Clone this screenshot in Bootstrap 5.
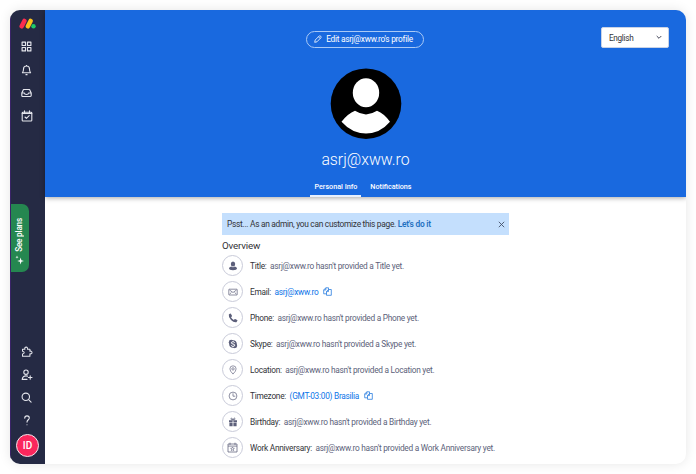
<!DOCTYPE html>
<html lang="en">
<head>
<meta charset="utf-8">
<meta name="viewport" content="width=device-width, initial-scale=1">
<title>Profile</title>
<link href="https://cdn.jsdelivr.net/npm/bootstrap@5.3.0/dist/css/bootstrap.min.css" rel="stylesheet">
<style>
html,body{height:474px;overflow:hidden}
body{font-family:Roboto,"Liberation Sans",sans-serif;font-size:8.5px;line-height:12px;color:#323338;background:#fff;padding:10px}
svg{display:block;flex:none}
.app-window{width:676px;height:454px;border-radius:10px;box-shadow:0 0 12px rgba(0,0,0,.1)}
.side{width:35px;flex:none;background:#252a44;border-left:1px solid #3b2468;color:#e4e5ec}
.side-logo{height:25px;padding:8px 0 0 8px}
.side-item{height:23px;padding-right:3px}
.side-low{height:22.8px}
.plans{width:17.5px;height:68px;margin-top:77px;border-radius:0 7px 7px 0;background:#258750;color:#fff;font-weight:500;padding-bottom:7px;padding-right:1px}
.plans span{writing-mode:vertical-rl;transform:rotate(180deg);font-size:8.2px;letter-spacing:-.2px;line-height:12px}
.plans svg{margin-top:3px}
.me{width:23px;height:23px;margin:2px 0 7px 5px;background:#fb275d;border:1px solid #f3e6ec;font-size:10px;font-weight:500;color:#fff}
.hero{height:187px;background:#1969df;color:#fff;box-shadow:0 1px 5px rgba(0,0,0,.35)}
.hero-row{display:grid;grid-template-columns:1fr auto 1fr;height:48px;padding:17px 17px 0 17px}
.edit-btn{width:118px;height:17px;margin:4px 1px 0 -1px;border:1px solid #a9c9f6;color:#fff;font-size:8.3px;letter-spacing:-.25px;line-height:12px;padding:0 2px 1px 0;--bs-btn-padding-x:0;--bs-btn-padding-y:0}
.lang{width:68px;height:21px;border-radius:2px;border:1px solid #c9d3e6;padding:0 6px 0 7px;color:#323338;font-size:8.2px;letter-spacing:-.3px}
.who{font-size:15.8px;line-height:20px;font-weight:300;margin-top:10px}
.photo{margin-top:11px}
.tabs{gap:5px;margin:10px 5px 0 0;font-size:7.2px;font-weight:500}
.tabs .nav-link{color:#fff;padding:0 4px;height:17px;line-height:13px;border-bottom:2px solid transparent;border-radius:0}
.tabs .nav-link.active{border-color:#e9f1fd}
.info{width:287px;margin-left:177px;padding-top:16px}
.tip{height:22px;background:#c4dffd;padding:0 4px 0 5px;font-size:8.4px;letter-spacing:-.3px}
.tip a{color:#1f70c1;font-weight:600;letter-spacing:-.25px}
.over{font-size:9.8px;letter-spacing:-.2px;line-height:13px;margin:4px 0 .5px;font-weight:400}
.fact{height:26.05px;font-size:8.3px;letter-spacing:-.26px;white-space:nowrap}
.disc{width:21px;height:21px;flex:none;border:1px solid #c9cbd9;margin-right:7px;color:#5c5f7a}
.val{color:#5c5f7a;margin-left:3.5px}
.val-link{color:#0b73e8;margin-left:3.5px}
.copy{color:#2b7de0;margin-left:5px}
</style>
</head>
<body>
<div class="app-window d-flex overflow-hidden bg-white">
  <nav class="side d-flex flex-column">
    <div class="side-logo"><svg width="17" height="11" viewBox="0 0 17 11"><g stroke-width="4.5" stroke-linecap="round"><path d="M2.7 8.300 5.400 2.900" stroke="#fb2d4e"/><path d="M8.900 8.300 11.600 2.900" stroke="#fdc21b"/></g><circle cx="14.500" cy="8.200" r="2.200" fill="#1fcb67"/></svg></div>
    <div class="side-item d-flex align-items-center justify-content-center"><svg width="11" height="11" viewBox="0 0 11 11" fill="none" stroke="currentColor" stroke-width="1.15"><path d="M1.1 1.1h3.4v3.4H1.1zM6.5 1.1h3.4v3.4H6.5zM1.1 6.5h3.4v3.4H1.1zM6.5 6.5h3.4v3.4H6.5z" stroke-linejoin="round"/></svg></div>
    <div class="side-item d-flex align-items-center justify-content-center"><svg width="11" height="12" viewBox="0 0 11 12" fill="none" stroke="currentColor" stroke-width="1.1" stroke-linejoin="round"><path d="M1.4 8.8C2.3 7.8 2.5 7 2.5 5a3 3 0 0 1 6 0c0 2 .2 2.800 1.100 3.800zM4.500 10.600h2M5.500 1v1"/></svg></div>
    <div class="side-item d-flex align-items-center justify-content-center"><svg width="11" height="10" viewBox="0 0 11 10" fill="none" stroke="currentColor" stroke-width="1.15" stroke-linejoin="round"><path d="M.8 5 2.500 1.500h6L10.200 5v2.600a.9.9 0 0 1-.9.9H1.700a.9.9 0 0 1-.9-.9zM.8 5h2.600c.2 2 4 2 4.200 0h2.600"/></svg></div>
    <div class="side-item d-flex align-items-center justify-content-center"><svg width="12" height="12" viewBox="0 0 12 12" fill="none" stroke="currentColor" stroke-width="1.1" stroke-linejoin="round" stroke-linecap="round"><rect x="1.200" y="2.200" width="9.600" height="8.800" rx=".8"/><path d="M1.200 3.500h9.600M3.500.8v2M8.500.8v2M4 7l1.400 1.300L8.200 5.600"/></svg></div>
    <div class="plans d-flex flex-column align-items-center justify-content-end">
      <span>See plans</span>
      <svg width="11" height="10" viewBox="0 0 11 10" fill="#fff"><path d="M6.600 2.600 7.400 5.200 10 6 7.400 6.800 6.600 9.400 5.800 6.800 3.200 6 5.800 5.200z"/><path d="M3 .6l.4 1.200 1.200.4-1.200.4L3 3.800l-.4-1.200-1.200-.4 1.200-.4z"/></svg>
    </div>
    <div class="mt-auto">
      <div class="side-low side-item d-flex align-items-center justify-content-center"><svg width="12" height="12" viewBox="0 0 12 12" fill="none" stroke="currentColor" stroke-width="1.050" stroke-linejoin="round"><path d="M1.500 3.300h2.400C3.400 1.900 4.200 1.100 5.200 1.100S6.900 1.900 6.500 3.300h2.400v1.900c1.300-.3 2.100.4 2.100 1.300S10.200 8.100 8.900 7.800v2.400H1.500V8.100c1.300-.2 1.700-.9 1.700-1.500S2.800 5.400 1.500 5.200z"/></svg></div>
      <div class="side-low side-item d-flex align-items-center justify-content-center"><svg width="12" height="12" viewBox="0 0 12 12" fill="none" stroke="currentColor" stroke-width="1.1" stroke-linejoin="round" stroke-linecap="round"><circle cx="5" cy="3.200" r="2.200"/><path d="M6.500 7.100C3.500 6.300 1.200 7.700 1.200 10.400H6M9.200 6.700v3.600M7.400 8.500H11"/></svg></div>
      <div class="side-low side-item d-flex align-items-center justify-content-center"><svg width="11" height="11" viewBox="0 0 11 11" fill="none" stroke="currentColor" stroke-width="1.100" stroke-linecap="round"><circle cx="4.800" cy="4.800" r="3.700"/><path d="m7.600 7.600 2.500 2.500"/></svg></div>
      <div class="side-low side-item d-flex align-items-center justify-content-center"><svg width="8" height="11" viewBox="0 0 8 11" fill="none" stroke="currentColor" stroke-width="1.100" stroke-linecap="round"><path d="M1.700 3.100C1.800 1.600 2.700.9 4 .9s2.300.8 2.300 2.100C6.300 4.800 4 4.800 4 7.100M4 9.700v.1"/></svg></div>
      <div class="me rounded-circle d-flex align-items-center justify-content-center">ID</div>
    </div>
  </nav>
  <main class="flex-grow-1">
    <header class="hero d-flex flex-column">
      <div class="hero-row">
        <span></span>
        <button type="button" class="edit-btn btn rounded-pill d-flex align-items-center justify-content-center"><svg class="me-1" width="8" height="8" viewBox="0 0 8 8" fill="none" stroke="#fff" stroke-width=".8" stroke-linejoin="round"><path d="M.7 7.300 1.200 5 5.300.9Q6 .4 6.700 1.200T7 2.600L3 6.800zM4.500 1.800l1.700 1.700"/></svg>Edit asrj@xww.ro's profile</button>
        <div class="lang bg-white d-flex align-items-center justify-content-between ms-auto"><span>English</span><svg width="6" height="5" viewBox="0 0 6 5" fill="none" stroke="#434659" stroke-width="1"><path d="m.7 1 2.300 2.300L5.300 1"/></svg></div>
      </div>
      <div class="d-flex flex-column align-items-center">
        <svg class="photo" width="72" height="72" viewBox="0 0 72 72"><circle cx="36" cy="35.700" r="35.300"/><ellipse cx="36" cy="24.700" rx="13.200" ry="14.500" fill="#fff"/><path d="M25 42.800Q36 50 47 42.800 54 45.500 60 53.800 50 65.500 36 65.500T11.500 53.800Q18 45.500 25 42.800z" fill="#fff"/></svg>
        <div class="who">asrj@xww.ro</div>
        <ul class="tabs nav"><li class="nav-item"><a class="nav-link active">Personal Info</a></li><li class="nav-item"><a class="nav-link">Notifications</a></li></ul>
      </div>
    </header>
    <section class="info">
      <div class="tip d-flex align-items-center justify-content-between"><span>Psst... As an admin, you can customize this page. <a class="text-decoration-none">Let's do it</a></span><svg width="7" height="7" viewBox="0 0 7 7" stroke="#44506a" stroke-width=".9"><path d="m.8.8 5.400 5.400M6.200.8.8 6.200"/></svg></div>
      <h1 class="over">Overview</h1>
      <div class="fact d-flex align-items-center"><span class="disc rounded-circle d-flex align-items-center justify-content-center"><svg width="10" height="10" viewBox="0 0 10 10" fill="currentColor"><ellipse cx="5" cy="2.900" rx="2.200" ry="2.500"/><path d="M1 7.300Q1.200 6 3.200 5.600q1.800 1.200 3.600 0Q8.800 6 9 7.300 9 9.200 5 9.200T1 7.300z"/></svg></span><span>Title:</span><span class="val">asrj@xww.ro hasn't provided a Title yet.</span></div>
      <div class="fact d-flex align-items-center"><span class="disc rounded-circle d-flex align-items-center justify-content-center"><svg width="10" height="8" viewBox="0 0 10 8" fill="none" stroke="currentColor" stroke-width=".7"><rect x=".8" y="1.200" width="8.400" height="5.800" rx=".4"/><path d="m1.500 2 3.500 2.500L8.500 2M1.500 6.200l2-1.800M8.500 6.200l-2-1.800"/></svg></span><span>Email:</span><span class="val-link">asrj@xww.ro</span><svg class="copy" width="9" height="9" viewBox="0 0 9 9" fill="none" stroke="currentColor" stroke-width=".8" stroke-linejoin="round"><path d="M3.500 6.800H.7V3L2.800.8h2.700v1.600M.7 3h2.100V.8M5.400 2.500h2.900v5.800H3.500V4.500zM3.500 4.600h2V2.500"/></svg></div>
      <div class="fact d-flex align-items-center"><span class="disc rounded-circle d-flex align-items-center justify-content-center"><svg width="10" height="10" viewBox="0 0 10 10" fill="currentColor"><path d="M.8 1.600 2.200.6q.5-.2.800.3L4 2.800q.1.400-.2.700l-.8.700Q3.800 6 5.800 7l.7-.8q.3-.3.700-.2l1.900 1q.5.300.3.800l-1 1.400Q5.800 9.800 3 7 .2 4.200.8 1.600z"/></svg></span><span>Phone:</span><span class="val">asrj@xww.ro hasn't provided a Phone yet.</span></div>
      <div class="fact d-flex align-items-center"><span class="disc rounded-circle d-flex align-items-center justify-content-center"><svg width="10" height="10" viewBox="0 0 10 10"><circle cx="5" cy="5" r="3.800" fill="currentColor"/><circle cx="3.200" cy="3.200" r="2.400" fill="currentColor"/><circle cx="6.800" cy="6.800" r="2.400" fill="currentColor"/><path d="M6.700 3.700Q6.300 2.700 5 2.700 3.400 2.700 3.400 3.800T5 5t1.700 1.200Q6.700 7.400 5 7.400 3.600 7.400 3.300 6.300" fill="none" stroke="#fff" stroke-width="1"/></svg></span><span>Skype:</span><span class="val">asrj@xww.ro hasn't provided a Skype yet.</span></div>
      <div class="fact d-flex align-items-center"><span class="disc rounded-circle d-flex align-items-center justify-content-center"><svg width="8" height="10" viewBox="0 0 8 10" fill="none" stroke="currentColor" stroke-width=".65"><path d="M4 9.100Q.9 6 .9 3.900a3.100 3.100 0 0 1 6.200 0Q7.100 6 4 9.100z"/><circle cx="4" cy="3.900" r="1.200"/></svg></span><span>Location:</span><span class="val">asrj@xww.ro hasn't provided a Location yet.</span></div>
      <div class="fact d-flex align-items-center"><span class="disc rounded-circle d-flex align-items-center justify-content-center"><svg width="10" height="10" viewBox="0 0 10 10" fill="none" stroke="currentColor" stroke-width=".7"><circle cx="5" cy="5" r="3.900"/><path d="M5 2.300v2.900h2.300"/></svg></span><span>Timezone:</span><span class="val-link">(GMT-03:00) Brasilia</span><svg class="copy" width="9" height="9" viewBox="0 0 9 9" fill="none" stroke="currentColor" stroke-width=".8" stroke-linejoin="round"><path d="M3.500 6.800H.7V3L2.800.8h2.700v1.600M.7 3h2.100V.8M5.400 2.500h2.900v5.800H3.500V4.500zM3.500 4.600h2V2.500"/></svg></div>
      <div class="fact d-flex align-items-center"><span class="disc rounded-circle d-flex align-items-center justify-content-center"><svg width="10" height="10" viewBox="0 0 10 10" fill="currentColor"><path d="M1 3.200h3.600v2.100H1zM5.400 3.200H9v2.100H5.400zM1.400 5.800h3.200v3.500H1.400zM5.400 5.800h3.200v3.500H5.400z"/><path d="M5 3C3.500 3 2.600 2.300 3 1.500S4.700 1.400 5 3c.3-1.600 1.600-2.300 2-1.500S6.500 3 5 3z" fill="none" stroke="currentColor" stroke-width=".8"/></svg></span><span>Birthday:</span><span class="val">asrj@xww.ro hasn't provided a Birthday yet.</span></div>
      <div class="fact d-flex align-items-center"><span class="disc rounded-circle d-flex align-items-center justify-content-center"><svg width="11" height="11" viewBox="0 0 11 11" fill="none" stroke="currentColor" stroke-width=".75"><path d="M1 2h9v8H1zM1 4.100h9M3 .7v2.200M8 .7v2.200"/><path d="m5.500 5 .6 1.300 1.300.1-1 .9.300 1.300-1.200-.7-1.200.7.300-1.300-1-.9 1.300-.1z" stroke-width=".6"/></svg></span><span>Work Anniversary:</span><span class="val">asrj@xww.ro hasn't provided a Work Anniversary yet.</span></div>
    </section>
  </main>
</div>
<script src="https://cdn.jsdelivr.net/npm/bootstrap@5.3.0/dist/js/bootstrap.bundle.min.js"></script>
</body>
</html>
